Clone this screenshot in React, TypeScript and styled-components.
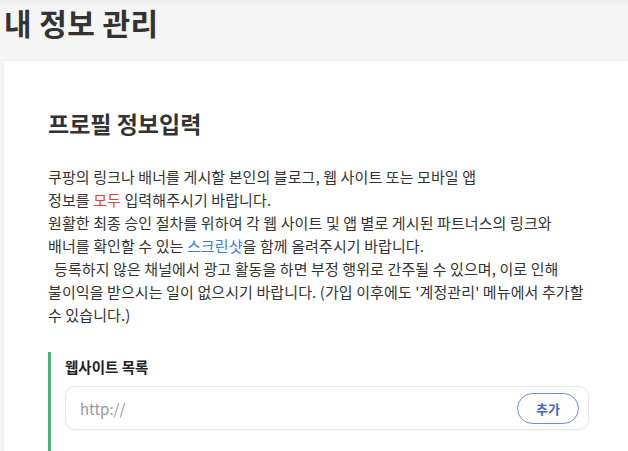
import styled, { createGlobalStyle } from "styled-components";

const GlobalStyle = createGlobalStyle`
  html, body {
    margin: 0;
    padding: 0;
    background: #f5f5f5;
    font-family: "Noto Sans CJK KR", "Noto Sans", sans-serif;
    color: #333;
  }
`;

const Page = styled.div`
  width: 628px;
  height: 451px;
  overflow: hidden;
  display: flex;
  flex-direction: column;
`;

const Header = styled.header`
  height: 61px;
  flex-shrink: 0;
  padding: 0 0 0 4px;
  box-sizing: border-box;
  background: linear-gradient(#eeeeee 0, #f5f5f5 6px);
`;

const PageTitle = styled.h1`
  margin: 0;
  font-size: 30px;
  line-height: 44px;
  font-weight: 700;
  color: #333;
  letter-spacing: 0.4px;
`;

const Card = styled.main`
  flex: 1;
  margin-left: 4px;
  background: #fff;
  box-shadow: 0 0 4px rgba(0, 0, 0, 0.06);
  padding: 45px 0 0 44px;
`;

const SectionTitle = styled.h2`
  margin: 0;
  font-size: 23px;
  line-height: 34px;
  font-weight: 700;
  color: #333;
`;

const Guide = styled.div`
  margin-top: 25px;
  font-size: 15px;
  line-height: 23px;
  color: #333;
  letter-spacing: 0.1px;
`;

const GuideLine = styled.div<{ $indent?: boolean }>`
  white-space: nowrap;
  padding-left: ${({ $indent }) => ($indent ? "6px" : "0")};
`;

const Mark = styled.span<{ $tone: "red" | "blue" }>`
  color: ${({ $tone }) => ($tone === "red" ? "#e5452f" : "#3b7ddd")};
`;

const SiteList = styled.section`
  margin-top: 26px;
  border-left: 3px solid #4fae7c;
  padding: 5px 0 30px 14px;
  width: 524px;
`;

const Label = styled.h3`
  margin: 0;
  font-size: 14.5px;
  line-height: 20px;
  font-weight: 700;
  color: #222;
`;

const InputBox = styled.div`
  margin-top: 9px;
  height: 44px;
  box-sizing: border-box;
  border: 1px solid #e6e6e6;
  border-radius: 10px;
  display: flex;
  align-items: center;
  padding: 0 9px 0 14px;
  box-shadow: 0 1px 2px rgba(0, 0, 0, 0.04);
`;

const UrlInput = styled.input`
  flex: 1;
  border: none;
  outline: none;
  background: transparent;
  font-family: "Noto Sans CJK KR", "Noto Sans", sans-serif;
  font-size: 15px;
  color: #333;
  padding: 0;

  &::placeholder {
    color: #999;
  }
`;

const AddButton = styled.button`
  width: 62px;
  height: 31px;
  border: 1.5px solid #6f8ad8;
  border-radius: 16px;
  background: #fff;
  color: #4467cc;
  font-family: "Noto Sans CJK KR", "Noto Sans", sans-serif;
  font-size: 13px;
  font-weight: 700;
  cursor: pointer;
  padding: 0;
`;

export default function App() {
  return (
    <Page>
      <GlobalStyle />
      <Header>
        <PageTitle>내 정보 관리</PageTitle>
      </Header>
      <Card>
        <SectionTitle>프로필 정보입력</SectionTitle>
        <Guide>
          <GuideLine>쿠팡의 링크나 배너를 게시할 본인의 블로그, 웹 사이트 또는 모바일 앱</GuideLine>
          <GuideLine>
            정보를 <Mark $tone="red">모두</Mark> 입력해주시기 바랍니다.
          </GuideLine>
          <GuideLine>원활한 최종 승인 절차를 위하여 각 웹 사이트 및 앱 별로 게시된 파트너스의 링크와</GuideLine>
          <GuideLine>
            배너를 확인할 수 있는 <Mark $tone="blue">스크린샷</Mark>을 함께 올려주시기 바랍니다.
          </GuideLine>
          <GuideLine $indent>등록하지 않은 채널에서 광고 활동을 하면 부정 행위로 간주될 수 있으며, 이로 인해</GuideLine>
          <GuideLine>불이익을 받으시는 일이 없으시기 바랍니다. (가입 이후에도 '계정관리' 메뉴에서 추가할</GuideLine>
          <GuideLine>수 있습니다.)</GuideLine>
        </Guide>
        <SiteList>
          <Label>웹사이트 목록</Label>
          <InputBox>
            <UrlInput placeholder="http://" />
            <AddButton type="button">추가</AddButton>
          </InputBox>
        </SiteList>
      </Card>
    </Page>
  );
}
